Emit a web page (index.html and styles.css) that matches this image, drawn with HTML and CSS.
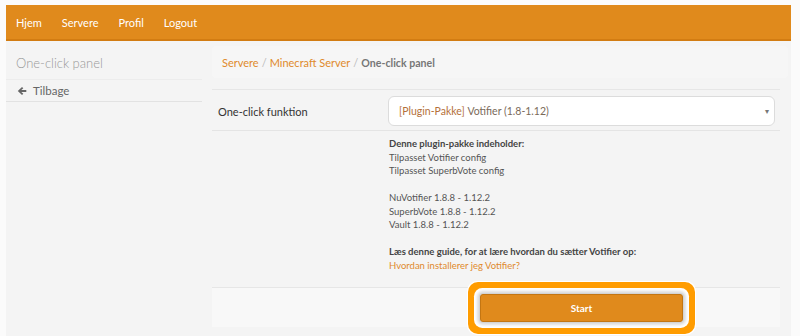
FILE: index.html
```html
<!DOCTYPE html>
<html lang="da">
<head>
<meta charset="utf-8">
<title>One-click panel</title>
<link rel="stylesheet" href="styles.css">
</head>
<body>
<div class="page">
  <nav class="navbar">
    <a href="#">Hjem</a>
    <a href="#">Servere</a>
    <a href="#">Profil</a>
    <a href="#">Logout</a>
  </nav>
  <div class="layout">
    <aside class="sidebar">
      <div class="side-title">One-click panel</div>
      <a class="side-link" href="#"><svg class="arrow" viewBox="0 0 10 10" width="10" height="10"><path d="M0.8 5 L5 0.9 L6.3 2.2 L4.3 4.1 L9.3 4.1 L9.3 5.9 L4.3 5.9 L6.3 7.8 L5 9.1 Z" fill="#666"/></svg>Tilbage</a>
    </aside>
    <main class="main">
      <div class="breadcrumb">
        <a href="#">Servere</a><span class="sep">/</span><a href="#">Minecraft Server</a><span class="sep">/</span><span class="current">One-click panel</span>
      </div>
      <section class="panel">
        <div class="row">
          <label class="label">One-click funktion</label>
          <div class="select">
            <span class="sel-tag">[Plugin-Pakke]</span>&nbsp;<span class="sel-name">Votifier (1.8-1.12)</span>
            <span class="caret">&#9662;</span>
          </div>
        </div>
        <div class="desc">
          <div class="desc-col">
            <p><b>Denne plugin-pakke indeholder:</b><br>Tilpasset Votifier config<br>Tilpasset SuperbVote config</p>
            <p>NuVotifier 1.8.8 - 1.12.2<br>SuperbVote 1.8.8 - 1.12.2<br>Vault 1.8.8 - 1.12.2</p>
            <p><b>Læs denne guide, for at lære hvordan du sætter Votifier op:</b><br><a href="#">Hvordan installerer jeg Votifier?</a></p>
          </div>
        </div>
        <div class="footer">
          <div class="footer-col">
            <button class="btn">Start</button>
          </div>
        </div>
      </section>
    </main>
  </div>
</div>
</body>
</html>
```
FILE: styles.css
```css
* { box-sizing: border-box; }
html, body { margin: 0; padding: 0; }
body {
  background: #fbfbfb;
  font-family: Lato, "Open Sans", sans-serif;
  color: #555;
  height: 336px;
  overflow: hidden;
}
a { text-decoration: none; }
.page {
  margin: 5px 9px 0 6px;
  background: #f4f4f4;
  height: 331px;
}
.navbar {
  height: 36px;
  background: #e08a1c;
  border-bottom: 2px solid #d27c12;
  display: flex;
  align-items: center;
  padding-left: 10px;
}
.navbar a {
  color: #fff;
  font-size: 11px;
  margin-right: 20px;
}
.layout {
  display: flex;
  gap: 10px;
  padding-top: 5px;
}
.sidebar {
  width: 196px;
  flex: none;
}
.side-title {
  font-size: 13px;
  font-weight: 300;
  color: #999;
  height: 34px;
  padding: 9px 0 0 10px;
  border-bottom: 1px solid #ececec;
}
.side-link {
  display: flex;
  align-items: center;
  height: 22px;
  padding-left: 11px;
  font-size: 11.5px;
  color: #666;
  border-bottom: 1px solid #e2e2e2;
}
.arrow { margin-right: 6px; }
.main {
  flex: 1;
  padding-right: 3px;
}
.breadcrumb {
  background: #f6f6f6;
  border-radius: 4px;
  height: 32px;
  padding: 10px 0 0 10px;
  font-size: 11px;
  margin-bottom: 11px;
}
.breadcrumb a { color: #e08a2c; }
.breadcrumb .sep { color: #bbb; margin: 0 3px; }
.breadcrumb .current { color: #777; font-weight: 700; font-size: 10.6px; }
.panel {
  width: 568px;
  border-top: 1px solid #e6e6e6;
}
.row {
  display: grid;
  grid-template-columns: 176px 387px;
  align-items: center;
  padding: 6px 0 4px;
  border-bottom: 1px solid #e4e4e4;
}
.label {
  font-size: 11px;
  color: #333;
  padding-left: 6px;
}
.select {
  position: relative;
  height: 30px;
  background: #fff;
  border: 1px solid #dcdcdc;
  border-radius: 6px;
  font-size: 10.5px;
  display: flex;
  align-items: center;
  padding-left: 10px;
}
.sel-tag { color: #b4703a; }
.sel-name { color: #7a6a5a; }
.caret {
  position: absolute;
  right: 5px;
  top: 9px;
  font-size: 8px;
  color: #777;
}
.desc {
  display: grid;
  grid-template-columns: 177px 1fr;
  padding: 6px 0 15px;
}
.desc-col {
  grid-column: 2;
  font-size: 9.5px;
  line-height: 13.5px;
  color: #555;
}
.desc-col p { margin: 0 0 13.5px; }
.desc-col p:last-child { margin-bottom: 0; }
.desc-col b { color: #444; }
.desc-col a { color: #e08a2c; }
.footer {
  background: #f8f8f8;
  border-top: 1px solid #e6e6e6;
  display: grid;
  grid-template-columns: 176px 387px;
  height: 40px;
  align-items: center;
}
.footer-col {
  grid-column: 2;
  display: flex;
  justify-content: center;
}
.btn {
  width: 203px;
  height: 28px;
  background: #e08a1c;
  border: 1px solid #c47612;
  border-radius: 3px;
  color: #fff;
  font-family: Lato, sans-serif;
  font-size: 10px;
  font-weight: 700;
  box-shadow: 0 0 0 1px #d4d4d4, 0 0 3px 3px #dcdcdc, 0 0 0 6px #fff, 0 0 0 12px #ff9c00, 0 0 0 13px #fff;
}
```
